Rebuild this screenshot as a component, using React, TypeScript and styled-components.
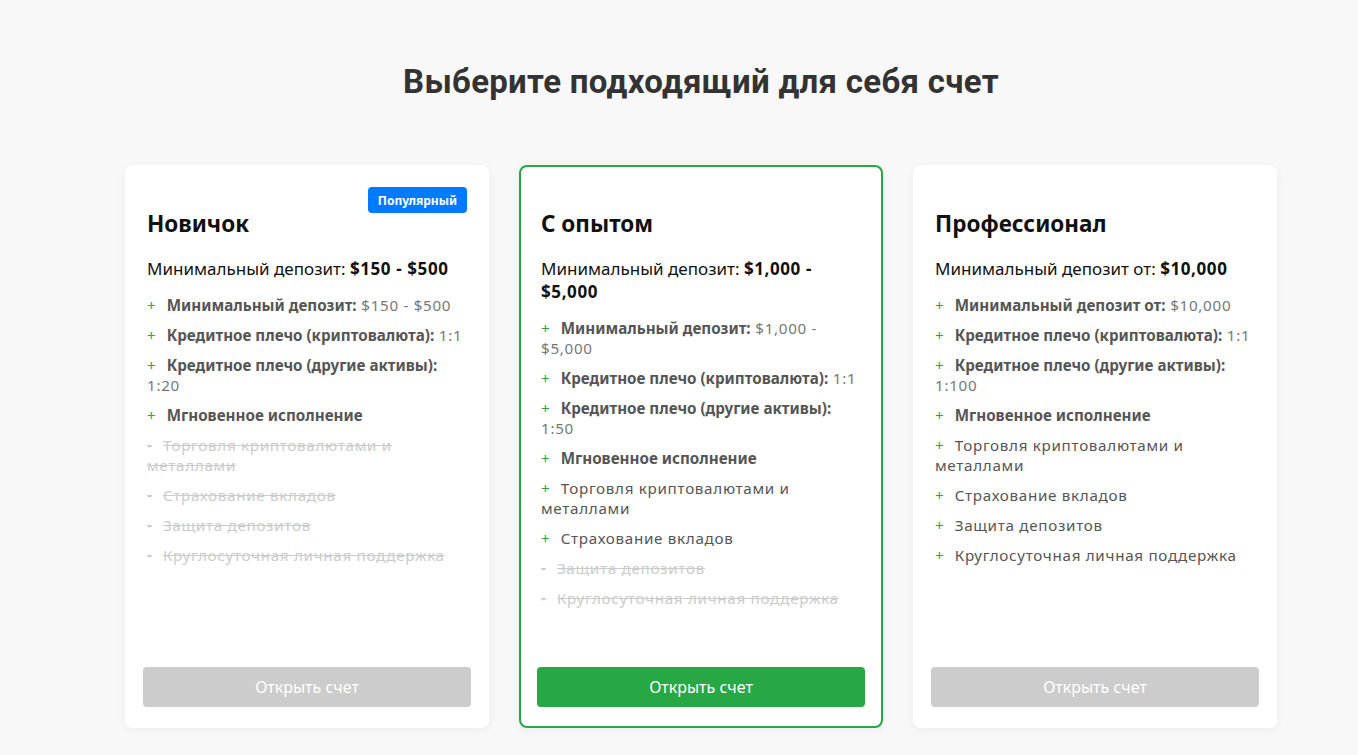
import React from "react";
import styled, { createGlobalStyle } from "styled-components";

type Feature = {
  label: string;
  value?: string;
  bold?: boolean;
  off?: boolean;
};

type Plan = {
  name: string;
  depositLabel: string;
  deposit: string;
  popular?: boolean;
  active?: boolean;
  features: Feature[];
};

const plans: Plan[] = [
  {
    name: "Новичок",
    depositLabel: "Минимальный депозит:",
    deposit: "$150 - $500",
    popular: true,
    features: [
      { label: "Минимальный депозит:", value: "$150 - $500", bold: true },
      { label: "Кредитное плечо (криптовалюта):", value: "1:1", bold: true },
      { label: "Кредитное плечо (другие активы):", value: "1:20", bold: true },
      { label: "Мгновенное исполнение", bold: true },
      { label: "Торговля криптовалютами и металлами", off: true },
      { label: "Страхование вкладов", off: true },
      { label: "Защита депозитов", off: true },
      { label: "Круглосуточная личная поддержка", off: true },
    ],
  },
  {
    name: "С опытом",
    depositLabel: "Минимальный депозит:",
    deposit: "$1,000 - $5,000",
    active: true,
    features: [
      { label: "Минимальный депозит:", value: "$1,000 - $5,000", bold: true },
      { label: "Кредитное плечо (криптовалюта):", value: "1:1", bold: true },
      { label: "Кредитное плечо (другие активы):", value: "1:50", bold: true },
      { label: "Мгновенное исполнение", bold: true },
      { label: "Торговля криптовалютами и металлами" },
      { label: "Страхование вкладов" },
      { label: "Защита депозитов", off: true },
      { label: "Круглосуточная личная поддержка", off: true },
    ],
  },
  {
    name: "Профессионал",
    depositLabel: "Минимальный депозит от:",
    deposit: "$10,000",
    features: [
      { label: "Минимальный депозит от:", value: "$10,000", bold: true },
      { label: "Кредитное плечо (криптовалюта):", value: "1:1", bold: true },
      { label: "Кредитное плечо (другие активы):", value: "1:100", bold: true },
      { label: "Мгновенное исполнение", bold: true },
      { label: "Торговля криптовалютами и металлами" },
      { label: "Страхование вкладов" },
      { label: "Защита депозитов" },
      { label: "Круглосуточная личная поддержка" },
    ],
  },
];

export default function App() {
  return (
    <>
      <GlobalStyle />
      <Page>
        <Inner>
          <Heading>Выберите подходящий для себя счет</Heading>
          <Cards>
            {plans.map((plan) => (
              <Card key={plan.name} $active={plan.active}>
                {plan.popular && <Badge>Популярный</Badge>}
                <PlanName>{plan.name}</PlanName>
                <Deposit>
                  {plan.depositLabel} <strong>{plan.deposit}</strong>
                </Deposit>
                <Features>
                  {plan.features.map((f) => (
                    <FeatureItem key={f.label} $off={f.off}>
                      <Sign $off={f.off}>{f.off ? "-" : "+"}</Sign>
                      {f.bold ? <Label>{f.label}</Label> : f.label}
                      {f.value && <Value> {f.value}</Value>}
                    </FeatureItem>
                  ))}
                </Features>
                <OpenButton $active={plan.active}>Открыть счет</OpenButton>
              </Card>
            ))}
          </Cards>
        </Inner>
      </Page>
    </>
  );
}

const GlobalStyle = createGlobalStyle`
  * { box-sizing: border-box; }
  body {
    margin: 0;
    background: #f8f8f8;
    font-family: "Noto Sans", Roboto, sans-serif;
  }
`;

const Page = styled.div`
  min-height: 100vh;
  display: flex;
  justify-content: center;
  padding-left: 44px;
  background: #f8f8f8;
`;

const Inner = styled.main`
  width: 1152px;
  display: flex;
  flex-direction: column;
  align-items: center;
`;

const Heading = styled.h1`
  margin: 62px 0 63px;
  font-family: Roboto, "Noto Sans", sans-serif;
  font-size: 33px;
  line-height: 40px;
  font-weight: 700;
  color: #333;
  letter-spacing: 0.3px;
`;

const Cards = styled.div`
  width: 100%;
  display: grid;
  grid-template-columns: repeat(3, 1fr);
  gap: 30px;
`;

const Card = styled.section<{ $active?: boolean }>`
  position: relative;
  height: 563px;
  display: flex;
  flex-direction: column;
  padding: 42px 20px 19px;
  background: #fff;
  border: 2px solid ${(p) => (p.$active ? "#28a745" : "#fff")};
  border-radius: 8px;
  box-shadow: 0 2px 10px rgba(0, 0, 0, 0.05);
`;

const Badge = styled.span`
  position: absolute;
  top: 20px;
  right: 20px;
  height: 26px;
  padding: 0 10px;
  display: flex;
  align-items: center;
  background: #007bff;
  color: #fff;
  border-radius: 4px;
  font-size: 12px;
  font-weight: 700;
`;

const PlanName = styled.h2`
  margin: 0;
  font-size: 22.5px;
  line-height: 30px;
  font-weight: 700;
  color: #111;
`;

const Deposit = styled.p`
  margin: 18px 0 0;
  font-size: 17px;
  line-height: 23px;
  color: #111;
  strong {
    font-weight: 700;
    letter-spacing: 0.6px;
  }
`;

const Features = styled.ul`
  list-style: none;
  margin: 15px 0 0;
  padding: 0;
  display: flex;
  flex-direction: column;
  gap: 10px;
`;

const FeatureItem = styled.li<{ $off?: boolean }>`
  font-size: 15.2px;
  line-height: 20px;
  letter-spacing: 0.7px;
  color: ${(p) => (p.$off ? "#ccc" : "#555")};
  text-decoration: ${(p) => (p.$off ? "line-through" : "none")};
`;

const Sign = styled.span<{ $off?: boolean }>`
  margin-right: 11px;
  letter-spacing: 0;
  color: ${(p) => (p.$off ? "#ccc" : "#28a745")};
`;

const Label = styled.b`
  font-weight: 700;
  letter-spacing: 0;
`;

const Value = styled.span`
  color: #777;
`;

const OpenButton = styled.button<{ $active?: boolean }>`
  margin: auto -4px 0;
  height: 40px;
  width: calc(100% + 8px);
  border: none;
  border-radius: 4px;
  background: ${(p) => (p.$active ? "#28a745" : "#ccc")};
  color: #fff;
  font-family: inherit;
  font-size: 16px;
  cursor: pointer;
`;
